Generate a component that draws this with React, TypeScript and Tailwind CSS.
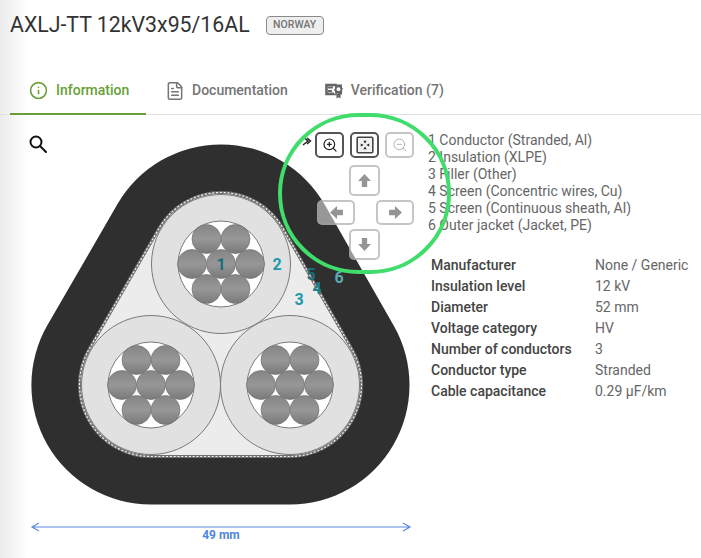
import { FileText, Info, ZoomIn, ZoomOut } from 'lucide-react';
import type { ReactNode } from 'react';

const legend = [
  '1 Conductor (Stranded, Al)',
  '2 Insulation (XLPE)',
  '3 Filler (Other)',
  '4 Screen (Concentric wires, Cu)',
  '5 Screen (Continuous sheath, Al)',
  '6 Outer jacket (Jacket, PE)',
];

const specs = [
  ['Manufacturer', 'None / Generic'],
  ['Insulation level', '12 kV'],
  ['Diameter', '52 mm'],
  ['Voltage category', 'HV'],
  ['Number of conductors', '3'],
  ['Conductor type', 'Stranded'],
  ['Cable capacitance', '0.29 µF/km'],
];

const cores = [
  { x: 221, y: 264 },
  { x: 151, y: 385 },
  { x: 290, y: 385 },
];

const strands = [
  [0, 0],
  [-29, 0],
  [29, 0],
  [-14.5, -25],
  [14.5, -25],
  [-14.5, 25],
  [14.5, 25],
];

const labels = [
  { n: '1', x: 221, y: 270, fill: '#17707c' },
  { n: '2', x: 277, y: 270, fill: '#1b9aa8' },
  { n: '3', x: 299, y: 305, fill: '#1b9aa8' },
  { n: '4', x: 317, y: 294, fill: '#1b7f8c' },
  { n: '5', x: 311, y: 280, fill: '#1a6f7a' },
  { n: '6', x: 339, y: 283, fill: '#5aa9b4' },
];

// rounded triangle around the three cores, r = distance from the core centres
function hull(r: number) {
  const [a, c, b] = [cores[0], cores[2], cores[1]];
  const n1 = { x: 0.869, y: -0.495 };
  const n2 = { x: 0, y: 1 };
  const n3 = { x: -0.866, y: -0.501 };
  const p = (o: { x: number; y: number }, n: { x: number; y: number }) =>
    `${(o.x + n.x * r).toFixed(1)} ${(o.y + n.y * r).toFixed(1)}`;
  return [
    `M${p(a, n1)}`,
    `L${p(c, n1)}`,
    `A${r} ${r} 0 0 1 ${p(c, n2)}`,
    `L${p(b, n2)}`,
    `A${r} ${r} 0 0 1 ${p(b, n3)}`,
    `L${p(a, n3)}`,
    `A${r} ${r} 0 0 1 ${p(a, n1)}Z`,
  ].join(' ');
}

function CableDrawing() {
  return (
    <svg viewBox="0 115 420 430" className="h-[430px] w-[420px]">
      <defs>
        <linearGradient id="strand" x1="0" y1="0" x2="0" y2="1">
          <stop offset="0" stopColor="#858585" />
          <stop offset="0.5" stopColor="#979797" />
          <stop offset="1" stopColor="#797979" />
        </linearGradient>
      </defs>
      <path d={hull(119.5)} fill="#2f2f2f" />
      <path d={hull(71.5)} fill="#ececec" stroke="#6f6f6f" strokeWidth="3" />
      <path d={hull(71.5)} fill="none" stroke="#f4f4f4" strokeWidth="1.2" strokeDasharray="2 1.8" />
      {cores.map((c, i) => (
        <g key={i}>
          <circle cx={c.x} cy={c.y} r="69.5" fill="#e1e1e1" stroke="#7a7a7a" />
          <circle cx={c.x} cy={c.y} r="43" fill="#fff" stroke="#7a7a7a" />
          {strands.map(([dx, dy], j) => (
            <circle key={j} cx={c.x + dx} cy={c.y + dy} r="14.5" fill="url(#strand)" stroke="#6b6b6b" strokeWidth="0.6" />
          ))}
        </g>
      ))}
      {labels.map((l) => (
        <text key={l.n} x={l.x} y={l.y} fill={l.fill} textAnchor="middle" fontSize="16" fontWeight="700">
          {l.n}
        </text>
      ))}
      <path d="M32 527H410M39 523L32 527L39 531M403 523L410 527L403 531" fill="none" stroke="#5b8ce0" strokeWidth="1.2" />
      <text x="221" y="539" fill="#4f86e0" textAnchor="middle" fontSize="12" fontWeight="700">
        49 mm
      </text>
    </svg>
  );
}

function VerifyIcon() {
  return (
    <svg viewBox="0 0 18 18" className="h-[18px] w-[18px]">
      <path d="M1 2.5H17V12.5H13V10.5H15.2V4.3H2.8V10.5H9V12.5H1Z" fill="#666666" />
      <path d="M1 2.5H11V12.5H1Z" fill="none" stroke="#666666" strokeWidth="1.6" />
      <path d="M3 5.5H8M3 9H7" stroke="#666666" strokeWidth="1.8" />
      <path d="M13 2.5L14.4 3.8L16.3 3.5L16.6 5.4L18 6.6L17 8.2L17.3 10L15.4 10.4L14.2 11.8L12.5 10.9L10.7 11.3L10.2 9.4L8.9 8L10 6.4L9.9 4.5L11.7 4.2Z" fill="#666666" />
      <circle cx="13.5" cy="7.2" r="1.9" fill="#fff" />
      <path d="M11.5 11.5V16.5L13.5 15.2L15.5 16.5V11.5Z" fill="#666666" />
    </svg>
  );
}

function MagnifierIcon() {
  return (
    <svg viewBox="0 0 20 20" className="h-5 w-5" fill="none" stroke="#111" strokeWidth="2">
      <circle cx="8" cy="8" r="5.5" />
      <path d="M12 12L18 18" strokeLinecap="round" />
    </svg>
  );
}

function FitIcon() {
  return (
    <svg viewBox="0 0 18 18" className="h-[18px] w-[18px]">
      <rect x="1.2" y="1.2" width="15.6" height="15.6" rx="1" fill="#f1f1f1" stroke="#444" strokeWidth="1.6" />
      <path d="M9 7.6L7.4 4.8H10.6ZM9 10.4L7.4 13.2H10.6ZM7.6 9L4.8 7.4V10.6ZM10.4 9L13.2 7.4V10.6Z" fill="#222" />
    </svg>
  );
}

function BlockArrow({ rotate }: { rotate: string }) {
  return (
    <svg viewBox="0 0 14 14" className={`h-[15px] w-[15px] ${rotate}`}>
      <path d="M7 1L13 7.5H9.5V13H4.5V7.5H1Z" fill="#949494" />
    </svg>
  );
}

function PadButton({ active, className, children }: { active?: boolean; className: string; children: ReactNode }) {
  return (
    <div
      className={`flex items-center justify-center rounded-[5px] border-2 bg-white/50 ${
        active ? 'border-[#555555]' : 'border-[#9e9e9e]/60'
      } ${className}`}
    >
      {children}
    </div>
  );
}

function MapControls() {
  return (
    <div className="absolute left-[315px] top-[17px] flex w-[99px] flex-col items-center gap-[4px]">
      <div className="mb-[3px] flex w-full justify-between">
        <PadButton active className="h-[26px] w-[29px]">
          <ZoomIn size={16} color="#222" strokeWidth={1.8} />
        </PadButton>
        <PadButton active className="h-[26px] w-[29px]">
          <FitIcon />
        </PadButton>
        <PadButton className="h-[26px] w-[29px]">
          <ZoomOut size={16} color="#b0b0b0" strokeWidth={1.5} />
        </PadButton>
      </div>
      <PadButton className="h-[31px] w-[31px]">
        <BlockArrow rotate="rotate-0" />
      </PadButton>
      <div className="flex w-full justify-between pl-[2px]">
        <PadButton className="h-[25px] w-[38px]">
          <BlockArrow rotate="-rotate-90" />
        </PadButton>
        <PadButton className="h-[25px] w-[38px]">
          <BlockArrow rotate="rotate-90" />
        </PadButton>
      </div>
      <PadButton className="h-[31px] w-[31px]">
        <BlockArrow rotate="rotate-180" />
      </PadButton>
    </div>
  );
}

export default function App() {
  return (
    <div className="relative h-[558px] w-[701px] overflow-hidden bg-linear-to-r from-[#ececec] to-white to-[28px] font-['Roboto',sans-serif]">
      <div className="flex h-[50px] items-center gap-[16px] pl-[10px]">
        <h1 className="text-[21.3px] font-normal text-[#333333]">AXLJ-TT 12kV3x95/16AL</h1>
        <span className="flex h-[19px] w-[58px] items-center justify-center rounded-[4px] border border-[#8a8a8a] bg-[#eeeeee] text-[10.5px] font-medium text-[#757575]">
          NORWAY
        </span>
      </div>

      <div className="mt-[21px] flex h-[44px] border-b border-[#e0e0e0]">
        <div className="ml-[10px] flex h-[44px] w-[136px] items-center gap-[8px] border-b-2 border-[#689f38] pb-[4px] pl-[19px] text-[14px] font-medium text-[#689f38]">
          <Info size={19} strokeWidth={2} />
          Information
        </div>
        <div className="ml-[19px] flex items-center gap-[7px] pb-[4px] text-[14px] font-medium text-[#757575]">
          <FileText size={20} strokeWidth={1.8} />
          Documentation
        </div>
        <div className="ml-[37px] flex items-center gap-[8px] pb-[4px] text-[14px] font-medium text-[#757575]">
          <VerifyIcon />
          Verification (7)
        </div>
      </div>

      <div className="relative flex">
        <div className="absolute left-[28px] top-[19px]">
          <MagnifierIcon />
        </div>
        <CableDrawing />
        <svg viewBox="0 0 12 12" className="absolute left-[300px] top-[20px] h-3 w-3" fill="none" stroke="#222" strokeWidth="1.4">
          <path d="M3 2L8 6L3 10M7 3L10.5 6L7 9" />
        </svg>
        <MapControls />

        <div className="pl-[8px] pt-[17px]">
          <ul className="text-[14px] leading-[17px] text-[#666666]">
            {legend.map((line) => (
              <li key={line}>{line}</li>
            ))}
          </ul>
          <div className="mt-[21px] grid grid-cols-[164px_1fr] pl-[3px] text-[14px] leading-[21px]">
            {specs.map(([k, v]) => (
              <div key={k} className="contents">
                <div className="font-medium text-[#444444]">{k}</div>
                <div className="text-[#666666]">{v}</div>
              </div>
            ))}
          </div>
        </div>
      </div>

      <div className="pointer-events-none absolute left-[278px] top-[113px] h-[161px] w-[173px] rounded-full border-[4px] border-[#40dc6c]" />
    </div>
  );
}
